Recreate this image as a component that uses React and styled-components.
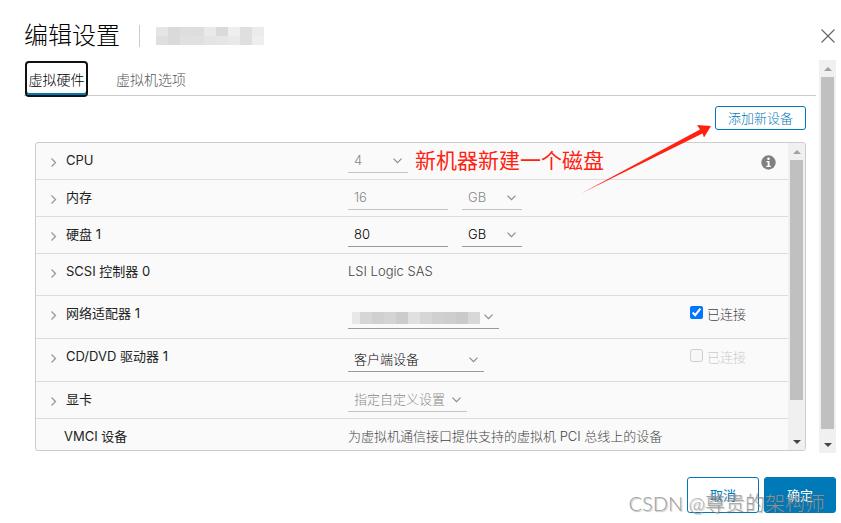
import { useState } from "react";
import styled, { createGlobalStyle } from "styled-components";

const GlobalStyle = createGlobalStyle`
  * {
    box-sizing: border-box;
  }

  body {
    margin: 0;
    background: #fff;
    color: #222;
    font-family: Inter, "Noto Sans CJK SC", sans-serif;
    font-size: 13px;
    font-weight: 300;
  }

  button,
  input,
  select {
    font: inherit;
  }
`;

const Dialog = styled.main`
  position: relative;
  padding: 20px 5px 10px 24px;
`;

const Header = styled.header`
  display: flex;
  align-items: center;
  height: 32px;
`;

const Title = styled.h1`
  margin: 0;
  color: #000;
  font-size: 24px;
  font-weight: 300;
  line-height: 32px;
`;

const VmName = styled.div`
  display: flex;
  align-items: center;
  height: 22px;
  margin-left: 19px;
  padding-left: 16px;
  border-left: 1px solid #ccc;
`;

const Mosaic = styled.span`
  display: flex;
  height: ${(props) => props.$height}px;
`;

const Tile = styled.span`
  width: ${(props) => props.$width || 12}px;
  background: linear-gradient(
    ${(props) => props.$top} 50%,
    ${(props) => props.$bottom} 50%
  );
`;

const CloseButton = styled.button`
  display: flex;
  margin-left: auto;
  padding: 1px;
  border: 0;
  background: none;
`;

const Body = styled.div`
  display: flex;
  margin-top: 8px;
`;

const Content = styled.div`
  flex: 1;
  min-width: 0;
  padding: 1px 3px 2px 0;
`;

const Tabs = styled.div`
  display: flex;
  height: 35px;
  border-bottom: 1px solid #ccc;
`;

const Tab = styled.button`
  min-width: 63px;
  height: 36px;
  margin-left: ${(props) => (props.$active ? 1 : 25)}px;
  padding: 0 ${(props) => (props.$active ? 1 : 3)}px;
  border: ${(props) => (props.$active ? "2px solid #111" : "0")};
  border-radius: 4px;
  background: ${(props) => (props.$active ? "#fff" : "none")};
  box-shadow: ${(props) => (props.$active ? "inset 0 -2px #0079b8" : "none")};
  color: ${(props) => (props.$active ? "#000" : "#565656")};
  font-size: 14px;
`;

const Toolbar = styled.div`
  position: relative;
  display: flex;
  justify-content: flex-end;
  margin: 10px 10px 12px 0;
`;

const Button = styled.button`
  min-width: ${(props) => (props.$small ? 91 : 72)}px;
  height: ${(props) => (props.$small ? 24 : 36)}px;
  padding: 0 12px;
  border: 1px solid #0079b8;
  border-radius: 3px;
  background: ${(props) => (props.$primary ? "#0079b8" : "#fff")};
  color: ${(props) => (props.$primary ? "#fff" : "#0079b8")};
  font-weight: ${(props) => (props.$small ? 300 : 400)};
  line-height: 20px;
`;

const Arrow = styled.svg`
  position: absolute;
  z-index: 1;
  top: 18px;
  right: 94px;
  pointer-events: none;
`;

const Panel = styled.div`
  display: flex;
  margin: 0 10px 0 11px;
  border: 1px solid #ccc;
  border-radius: 3px;
  overflow: hidden;
  background: #fafafa;
`;

const Rows = styled.div`
  flex: 1;
  min-width: 0;
`;

const Row = styled.div`
  display: grid;
  grid-template-columns: 312px minmax(0, 1fr) 98px;
  height: ${(props) => props.$height}px;
  border-bottom: 1px solid #ddd;

  &:last-child {
    border-bottom: 0;
  }
`;

const Name = styled.div`
  display: flex;
  padding-left: ${(props) => (props.$flat ? 28 : 14)}px;
  font-weight: 400;
  line-height: 34px;
`;

const Expander = styled.button`
  display: flex;
  align-items: center;
  width: 16px;
  height: 38px;
  padding: 0;
  border: 0;
  background: none;
`;

const Value = styled.div`
  display: flex;
  align-items: flex-start;
  gap: 14px;
  padding-top: ${(props) => props.$top || 0}px;
  color: #444;
  line-height: 34px;
  white-space: nowrap;
`;

const Side = styled.div`
  padding-top: 10px;
`;

const InfoButton = styled.button`
  display: flex;
  margin: 2px 12px 0 auto;
  padding: 0;
  border: 0;
  background: none;
`;

const Field = styled.span`
  position: relative;
  display: flex;
  width: ${(props) => props.$width}px;
  height: 24px;
  border-bottom: 1px solid ${(props) => (props.$disabled ? "#c4c4c4" : "#999")};
  line-height: 22px;

  svg {
    position: absolute;
    top: 9px;
    right: 6px;
    pointer-events: none;
  }
`;

const Select = styled.select`
  width: 100%;
  height: 22px;
  padding: 0 0 0 6px;
  appearance: none;
  border: 0;
  background: none;
  color: #000;
  line-height: 22px;
  opacity: 1;

  &:disabled {
    color: #888;
  }
`;

const Input = styled.input`
  width: 100%;
  height: 22px;
  padding: 0 6px;
  border: 0;
  background: none;
  color: #000;

  &:disabled {
    color: #888;
  }
`;

const NetworkMask = styled.span`
  position: absolute;
  top: 7px;
  left: 4px;
  pointer-events: none;
`;

const Check = styled.label`
  display: flex;
  align-items: flex-start;
  gap: 4px;
  color: ${(props) => (props.$disabled ? "#ccc" : "#444")};
  line-height: 16px;

  input {
    width: 13px;
    height: 13px;
    margin: 0;
  }
`;

const Note = styled.strong`
  margin-left: -7px;
  color: #ff2211;
  font-size: 21px;
  font-weight: 400;
  line-height: 24px;
`;

const Bar = styled.div`
  display: flex;
  flex-direction: column;
  align-items: center;
  width: 17px;
  background: #f0f0f0;
`;

const Thumb = styled.div`
  flex: 1;
  width: 13px;
  margin-bottom: ${(props) => props.$rest}px;
  background: #c0c0c0;
`;

const BarButton = styled.button`
  display: flex;
  align-items: center;
  justify-content: center;
  width: 17px;
  height: 17px;
  padding: 0;
  border: 0;
  background: none;
`;

const Footer = styled.footer`
  display: flex;
  justify-content: flex-end;
  gap: 5px;
  margin-top: 24px;
`;

const Watermark = styled.div`
  position: absolute;
  right: 16px;
  bottom: 5px;
  color: rgba(150, 150, 150, 0.9);
  font-family: Lato, "Noto Sans CJK SC", sans-serif;
  font-size: 20px;
  line-height: 30px;
  text-shadow: 1px 1px 1px rgba(90, 90, 90, 0.4);
  pointer-events: none;
`;

const ChevronDown = () => (
  <svg width="9" height="6" viewBox="0 0 9 6" fill="none" stroke="#8c8c8c">
    <path d="M0.5 0.7 4.5 4.7 8.5 0.7" strokeWidth="1.2" />
  </svg>
);

const ChevronRight = () => (
  <svg width="8" height="9" viewBox="0 0 8 9" fill="none" stroke="#999">
    <path d="M1.5 0.5 5.5 4.5 1.5 8.5" strokeWidth="1.3" />
  </svg>
);

const ScrollBar = ({ rest }) => (
  <Bar>
    <BarButton aria-label="向上滚动">
      <svg width="8" height="4" viewBox="0 0 8 4" fill="#a0a0a0">
        <path d="M0 4 4 0 8 4Z" />
      </svg>
    </BarButton>
    <Thumb $rest={rest} />
    <BarButton aria-label="向下滚动">
      <svg width="8" height="4" viewBox="0 0 8 4" fill="#444">
        <path d="M0 0 4 4 8 0Z" />
      </svg>
    </BarButton>
  </Bar>
);

const SelectField = ({ label, width, options, disabled, children }) => (
  <Field $width={width} $disabled={disabled}>
    <Select aria-label={label} disabled={disabled}>
      {options.map((option) => (
        <option key={option}>{option}</option>
      ))}
    </Select>
    {children}
    <ChevronDown />
  </Field>
);

const InputField = ({ label, value, disabled }) => (
  <Field $width={100} $disabled={disabled}>
    <Input aria-label={label} defaultValue={value} disabled={disabled} />
  </Field>
);

const HardwareRow = ({ name, height = 37, top, flat, side, children }) => (
  <Row $height={height}>
    <Name $flat={flat}>
      {!flat && (
        <Expander aria-label={`展开 ${name}`}>
          <ChevronRight />
        </Expander>
      )}
      {name}
    </Name>
    <Value $top={top}>{children}</Value>
    <Side>{side}</Side>
  </Row>
);

const vmTiles = [
  ["#e5e5e5", "#dfdfdf"],
  ["#dadada", "#dadada"],
  ["#dedede", "#e0e0e0"],
  ["#dddddd", "#e0e0e0"],
  ["#e9e9e9", "#e4e4e4"],
  ["#dadada", "#e6e6e6"],
  ["#eeeeee", "#e9e9e9"],
  ["#dfdfdf", "#dfdfdf"],
  ["#ebebeb", "#eeeeee"],
];

const networkTiles = [
  "#e8e8e8",
  "#d6d6d6",
  "#d0d0d0",
  "#d4d4d4",
  "#cccccc",
  "#e0e0e0",
  "#d6d6d6",
  "#d0d0d0",
  "#cecece",
  "#cacaca",
  "#d8d8d8",
];

const App = () => {
  const [tab, setTab] = useState(0);
  const [connected, setConnected] = useState(true);

  return (
    <>
      <GlobalStyle />
      <Dialog>
        <Header>
          <Title>编辑设置</Title>
          <VmName>
            <Mosaic $height={18}>
              {vmTiles.map(([a, b], i) => (
                <Tile key={i} $top={a} $bottom={b} />
              ))}
            </Mosaic>
          </VmName>
          <CloseButton aria-label="关闭">
            <svg width="14" height="14" viewBox="0 0 14 14" stroke="#666">
              <path d="M0.5 0.5 13.5 13.5M13.5 0.5 0.5 13.5" strokeWidth="1.2" />
            </svg>
          </CloseButton>
        </Header>

        <Body>
          <Content>
            <Tabs role="tablist">
              {["虚拟硬件", "虚拟机选项"].map((text, i) => (
                <Tab
                  key={text}
                  role="tab"
                  aria-selected={tab === i}
                  $active={tab === i}
                  onClick={() => setTab(i)}
                >
                  {text}
                </Tab>
              ))}
            </Tabs>

            <Toolbar>
              <Button $small>添加新设备</Button>
              <Arrow width="130" height="70" viewBox="0 0 130 70">
                <path
                  d="M-1 69.5 118 5.5 115 1 129 2 122 13.5 120.500 9.5Z"
                  fill="#ff2211"
                />
              </Arrow>
            </Toolbar>

            <Panel>
              <Rows>
                <HardwareRow
                  name="CPU"
                  top={6}
                  side={
                    <InfoButton aria-label="信息">
                      <svg width="15" height="15" viewBox="0 0 15 15">
                        <circle cx="7.5" cy="7.5" r="7.2" fill="#808080" />
                        <circle cx="7.5" cy="3.8" r="1.3" fill="#fff" />
                        <path
                          d="M5.5 6H8.5V10.7H9.8V12H5.3V10.7H6.7V7.3H5.5Z"
                          fill="#fff"
                        />
                      </svg>
                    </InfoButton>
                  }
                >
                  <SelectField label="CPU" width={60} options={["4"]} disabled />
                  <Note>新机器新建一个磁盘</Note>
                </HardwareRow>

                <HardwareRow name="内存" top={6}>
                  <InputField label="内存" value="16" disabled />
                  <SelectField label="内存单位" width={60} options={["GB"]} disabled />
                </HardwareRow>

                <HardwareRow name="硬盘 1" top={6}>
                  <InputField label="硬盘 1" value="80" />
                  <SelectField label="硬盘单位" width={60} options={["GB"]} />
                </HardwareRow>

                <HardwareRow name="SCSI 控制器 0" height={42}>
                  LSI Logic SAS
                </HardwareRow>

                <HardwareRow
                  name="网络适配器 1"
                  height={43}
                  top={9}
                  side={
                    <Check>
                      <input
                        type="checkbox"
                        checked={connected}
                        onChange={(e) => setConnected(e.target.checked)}
                      />
                      已连接
                    </Check>
                  }
                >
                  <SelectField label="网络适配器 1" width={151} options={[""]}>
                    <NetworkMask>
                      <Mosaic $height={12}>
                        {networkTiles.map((color, i) => (
                          <Tile
                            key={i}
                            $width={i === 0 ? 8 : 12}
                            $top={color}
                            $bottom={color}
                          />
                        ))}
                      </Mosaic>
                    </NetworkMask>
                  </SelectField>
                </HardwareRow>

                <HardwareRow
                  name="CD/DVD 驱动器 1"
                  height={43}
                  top={9}
                  side={
                    <Check $disabled>
                      <input type="checkbox" disabled />
                      已连接
                    </Check>
                  }
                >
                  <SelectField
                    label="CD/DVD 驱动器 1"
                    width={136}
                    options={["客户端设备"]}
                  />
                </HardwareRow>

                <HardwareRow name="显卡" top={6}>
                  <SelectField
                    label="显卡"
                    width={119}
                    options={["指定自定义设置"]}
                    disabled
                  />
                </HardwareRow>

                <HardwareRow name="VMCI 设备" height={31} flat>
                  为虚拟机通信接口提供支持的虚拟机 PCI 总线上的设备
                </HardwareRow>
              </Rows>
              <ScrollBar rest={33} />
            </Panel>
          </Content>
          <ScrollBar rest={7} />
        </Body>

        <Footer>
          <Button>取消</Button>
          <Button $primary>确定</Button>
        </Footer>
        <Watermark>CSDN @尊贵的架构师</Watermark>
      </Dialog>
    </>
  );
};

export default App;
